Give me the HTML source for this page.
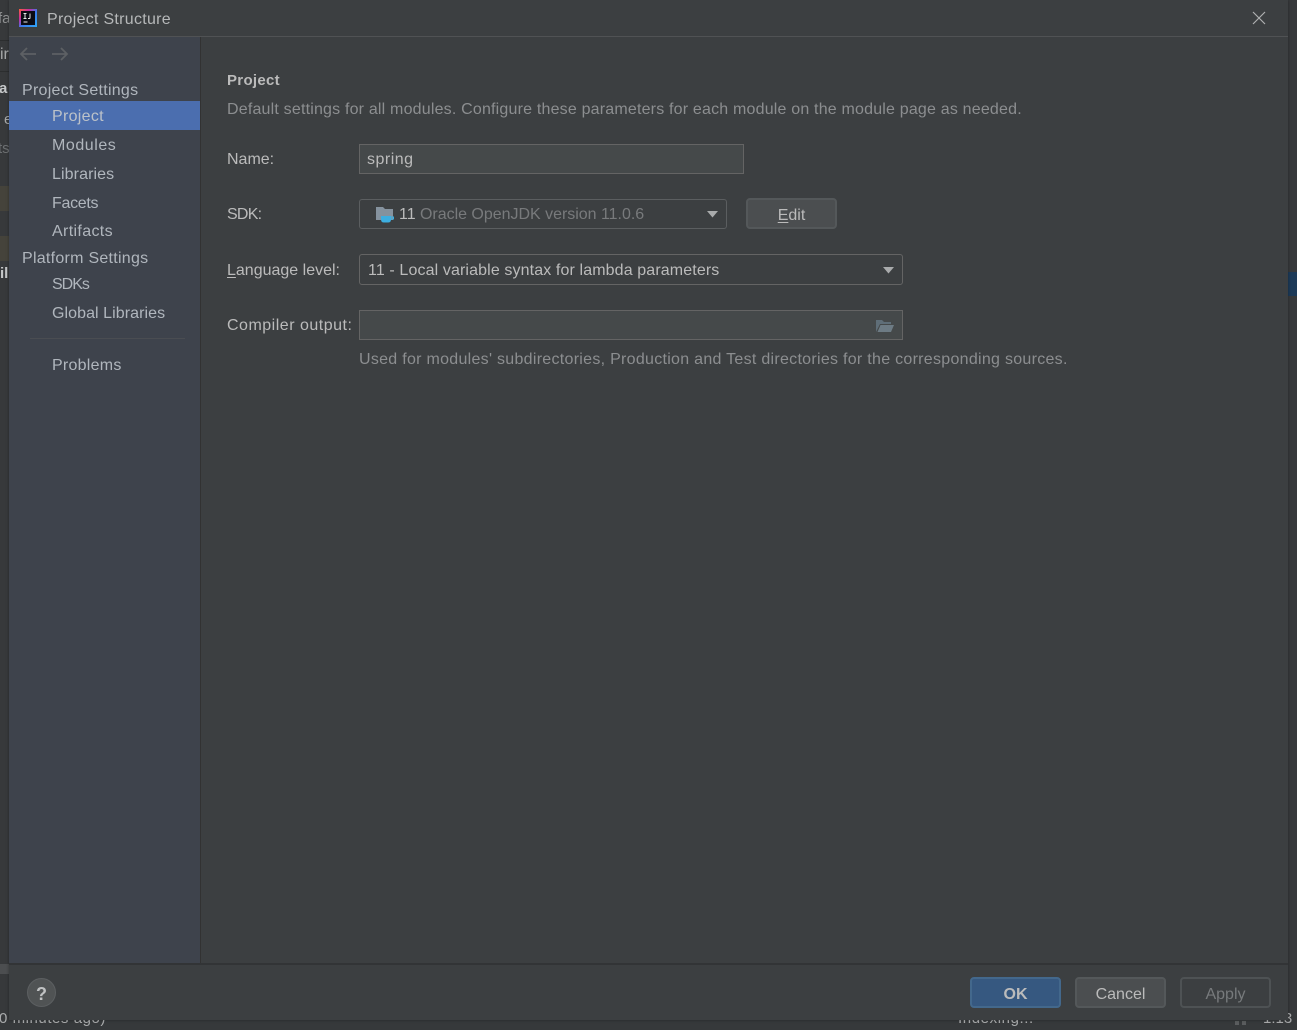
<!DOCTYPE html>
<html>
<head>
<meta charset="utf-8">
<style>
html,body{margin:0;padding:0;width:1297px;height:1030px;overflow:hidden;background:#33373a;}
body{position:relative;font-family:"Liberation Sans",sans-serif;font-size:15px;color:#bbbbbb;}
.a{position:absolute;}
.t{position:absolute;white-space:nowrap;line-height:20px;height:20px;}
.side{color:#b0b6bd;}
.box{position:absolute;box-sizing:border-box;border:1px solid #646464;}
.btn{position:absolute;box-sizing:border-box;border:2px solid #54585a;border-radius:4px;background:#4b4e50;text-align:center;line-height:31px;font-size:16px;color:#bbbbbb;}
</style>
</head>
<body>
<!-- background IDE fragments -->
<div class="a" style="left:0;top:0;width:9px;height:1030px;background:#37393b;"></div>
<div class="a" style="left:0;top:40px;width:9px;height:1px;background:#2c2e2f;"></div>
<div class="a" style="left:0;top:71px;width:9px;height:1px;background:#2c2e2f;"></div>
<div class="a" style="left:0;top:186px;width:9px;height:25px;background:#45433b;"></div>
<div class="a" style="left:0;top:236px;width:9px;height:25px;background:#45433b;"></div>
<div class="a" style="left:0;top:964px;width:9px;height:10px;background:#4c4e50;"></div>
<div class="t" style="left:-2px;top:9px;width:11px;overflow:hidden;color:#8f9192;">fa</div>
<div class="t" style="left:0px;top:45px;width:9px;overflow:hidden;color:#a5a7a8;font-size:16px;">ir</div>
<div class="t" style="left:-1px;top:79px;width:9px;overflow:hidden;color:#c5c7c8;font-weight:bold;">a</div>
<div class="t" style="left:4px;top:110px;width:5px;overflow:hidden;color:#a5a7a8;">e</div>
<div class="t" style="left:-2px;top:139px;width:11px;overflow:hidden;color:#6d7072;">ts</div>
<div class="t" style="left:0px;top:264px;width:9px;overflow:hidden;color:#c5c7c8;font-weight:bold;">il</div>
<div class="a" style="left:1288px;top:0;width:9px;height:1030px;background:#37393b;"></div>
<div class="a" style="left:1288px;top:272px;width:9px;height:24px;background:#1d3a58;"></div>
<div class="a" style="left:0;top:1020px;width:1297px;height:10px;overflow:hidden;background:#36393b;"></div>
<div class="t" style="left:-1px;top:1009px;letter-spacing:.55px;color:#a9abac;">0 minutes ago)</div>
<div class="t" style="left:958px;top:1009px;letter-spacing:.6px;color:#a9abac;">Indexing...</div>
<div class="a" style="left:1235px;top:1021px;width:4px;height:4px;background:#5a5d5f;"></div>
<div class="a" style="left:1242px;top:1021px;width:4px;height:4px;background:#5a5d5f;"></div>
<div class="t" style="left:1263px;top:1009px;color:#a9abac;">1:13</div>

<!-- dialog -->
<div class="a" style="left:9px;top:0;width:1279px;height:1020px;background:#3c3f41;box-shadow:0 0 3px rgba(0,0,0,.35);"></div>
<!-- title bar -->
<div class="a" style="left:9px;top:36px;width:1279px;height:1px;background:#505254;"></div>
<svg class="a" style="left:19px;top:9px;" width="18" height="18" viewBox="0 0 18 18">
<defs><linearGradient id="g" x1="0" y1="0" x2="1" y2="1"><stop offset="0" stop-color="#fe5f3a"/><stop offset=".3" stop-color="#c52ea0"/><stop offset=".55" stop-color="#3a7bf0"/><stop offset="1" stop-color="#2ea7f5"/></linearGradient></defs>
<rect width="18" height="18" fill="url(#g)"/>
<rect x="2" y="2" width="14" height="14" fill="#0b0b14"/>
<path d="M4.500 4.500h3M6 4.500v5M4.500 9.500h3M11 4.500v4.200q0 .8-.8.8H9" fill="none" stroke="#e8e8e8" stroke-width="1"/>
<rect x="4.500" y="12.500" width="4" height="1" fill="#e8e8e8"/>
</svg>
<div class="t" style="left:47px;top:10px;font-size:16px;letter-spacing:.28px;color:#b6b8b9;">Project Structure</div>
<svg class="a" style="left:1252px;top:11px;" width="14" height="14" viewBox="0 0 14 14"><path d="M1 1L13 13M13 1L1 13" stroke="#aeb0b1" stroke-width="1.200" fill="none"/></svg>

<!-- sidebar -->
<div class="a" style="left:9px;top:37px;width:191px;height:926px;background:#3e434c;"></div>
<div class="a" style="left:200px;top:37px;width:1px;height:926px;background:#323232;"></div>
<svg class="a" style="left:19px;top:46px;" width="18" height="16" viewBox="0 0 18 16"><path d="M17 8H2M8 2L2 8l6 6" stroke="#5d6064" stroke-width="1.800" fill="none"/></svg>
<svg class="a" style="left:51px;top:46px;" width="18" height="16" viewBox="0 0 18 16"><path d="M1 8h15M10 2l6 6-6 6" stroke="#5d6064" stroke-width="1.800" fill="none"/></svg>

<div class="t side" style="left:22px;top:81px;font-size:16px;letter-spacing:.27px;">Project Settings</div>
<div class="a" style="left:9px;top:101px;width:191px;height:29px;background:#4b6eaf;"></div>
<div class="t side" style="left:52px;top:107px;font-size:16px;letter-spacing:.3px;color:#bcc2c9;">Project</div>
<div class="t side" style="left:52px;top:136px;font-size:16px;letter-spacing:.55px;">Modules</div>
<div class="t side" style="left:52px;top:165px;font-size:16px;letter-spacing:.1px;">Libraries</div>
<div class="t side" style="left:52px;top:194px;font-size:16px;letter-spacing:-.3px;">Facets</div>
<div class="t side" style="left:52px;top:222px;font-size:16px;letter-spacing:.35px;">Artifacts</div>
<div class="t side" style="left:22px;top:249px;font-size:16px;letter-spacing:.27px;">Platform Settings</div>
<div class="t side" style="left:52px;top:275px;font-size:16px;letter-spacing:-1px;">SDKs</div>
<div class="t side" style="left:52px;top:304px;font-size:16px;letter-spacing:.07px;">Global Libraries</div>
<div class="a" style="left:30px;top:338px;width:155px;height:1px;background:#4a4d52;"></div>
<div class="t side" style="left:52px;top:356px;font-size:16px;letter-spacing:.25px;">Problems</div>

<!-- content -->
<div class="t" style="left:227px;top:71px;font-weight:bold;font-size:15px;letter-spacing:.3px;color:#bbbbbb;">Project</div>
<div class="t" style="left:227px;top:100px;font-size:16px;letter-spacing:.19px;color:#8c8e90;">Default settings for all modules. Configure these parameters for each module on the module page as needed.</div>

<div class="t" style="left:227px;top:150px;font-size:16px;">Name:</div>
<div class="box" style="left:359px;top:144px;width:385px;height:30px;background:#45494a;"></div>
<div class="t" style="left:367px;top:150px;font-size:16px;letter-spacing:.5px;color:#bbbbbb;">spring</div>

<div class="t" style="left:227px;top:205px;font-size:16px;letter-spacing:-.75px;">SDK:</div>
<div class="box" style="left:359px;top:199px;width:368px;height:30px;border-radius:3px;background:#3c3f41;border-color:#5b5e60;"></div>
<svg class="a" style="left:375px;top:205px;" width="21" height="18" viewBox="0 0 21 18">
<path d="M1 2h7l2 2h8v11H1z" fill="#85929e"/>
<path d="M6 11h10v3.500q0 3-3 3h-4q-3 0-3-3z" fill="#3daee0"/>
<path d="M16 12h2.500v2H16" fill="none" stroke="#3daee0" stroke-width="1"/>
</svg>
<div class="t" style="left:399px;top:205px;font-size:16px;letter-spacing:-.02px;color:#bbbbbb;">11 <span style="color:#787a7c;">Oracle OpenJDK version 11.0.6</span></div>
<svg class="a" style="left:707px;top:211px;" width="11" height="7" viewBox="0 0 11 7"><path d="M0 0h11L5.500 6.500z" fill="#a9abac"/></svg>
<div class="btn" style="left:746px;top:198px;width:91px;height:31px;"><span style="text-decoration:underline;text-underline-offset:2px;">E</span>dit</div>

<div class="t" style="left:227px;top:261px;font-size:16px;"><span style="text-decoration:underline;text-underline-offset:2px;">L</span>anguage level:</div>
<div class="box" style="left:359px;top:254px;width:544px;height:31px;border-radius:3px;background:#3c3f41;"></div>
<div class="t" style="left:368px;top:261px;font-size:16px;letter-spacing:.12px;color:#bbbbbb;">11 - Local variable syntax for lambda parameters</div>
<svg class="a" style="left:883px;top:267px;" width="11" height="7" viewBox="0 0 11 7"><path d="M0 0h11L5.500 6.500z" fill="#a9abac"/></svg>

<div class="t" style="left:227px;top:316px;font-size:16px;letter-spacing:.5px;">Compiler output:</div>
<div class="box" style="left:359px;top:310px;width:544px;height:30px;background:#45494a;"></div>
<svg class="a" style="left:875px;top:318px;" width="20" height="15" viewBox="0 0 20 15"><path d="M1 14V2h6l2 2h7v2H5L1 14z" fill="#5f6e78"/><path d="M5.500 7H19l-3 7H2.500z" fill="#6d7b84"/></svg>
<div class="t" style="left:359px;top:350px;font-size:16px;letter-spacing:.285px;color:#8c8e90;">Used for modules' subdirectories, Production and Test directories for the corresponding sources.</div>

<!-- footer -->
<div class="a" style="left:9px;top:963px;width:1279px;height:2px;background:#323436;"></div>
<div class="a" style="left:27px;top:978px;width:29px;height:29px;box-sizing:border-box;border-radius:50%;background:#505354;border:1px solid #5c5f61;color:#c0c2c3;font-weight:bold;font-size:18px;line-height:31px;text-align:center;">?</div>
<div class="btn" style="left:970px;top:977px;width:91px;height:31px;background:#365880;border-color:#43688c;font-weight:bold;">OK</div>
<div class="btn" style="left:1075px;top:977px;width:91px;height:31px;">Cancel</div>
<div class="btn" style="left:1180px;top:977px;width:91px;height:31px;background:#3c3f41;border-color:#4e5254;color:#777a7c;">Apply</div>
</body>
</html>
